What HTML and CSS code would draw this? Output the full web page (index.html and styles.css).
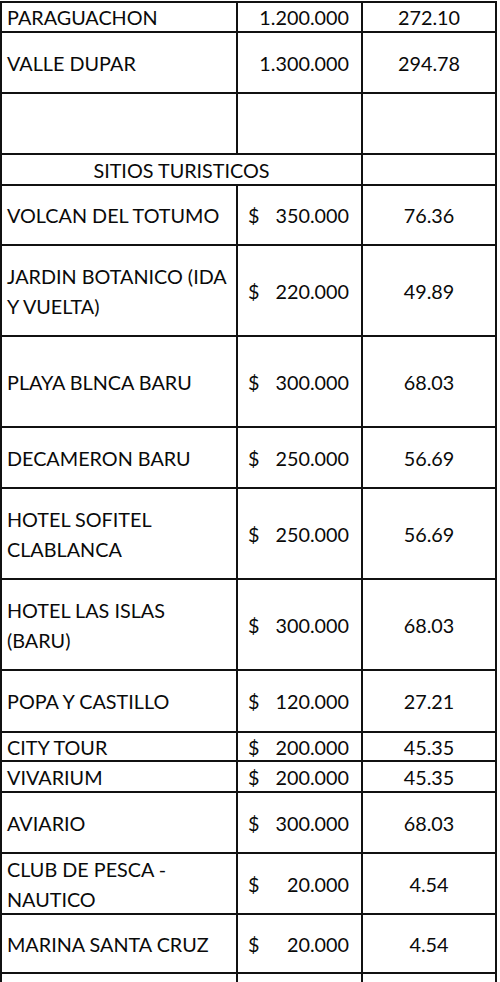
FILE: index.html
```html
<!DOCTYPE html>
<html lang="es">
<head>
<meta charset="utf-8">
<title>Tarifas</title>
<link rel="stylesheet" href="styles.css">
</head>
<body>
<div class="sheet">
  <div class="cell name">PARAGUACHON</div>
  <div class="cell amt"><span class="cur"></span><span class="num">1.200.000</span></div>
  <div class="cell usd">272.10</div>

  <div class="cell name">VALLE DUPAR</div>
  <div class="cell amt"><span class="cur"></span><span class="num">1.300.000</span></div>
  <div class="cell usd">294.78</div>

  <div class="cell name"></div>
  <div class="cell amt"></div>
  <div class="cell usd"></div>

  <div class="cell head">SITIOS TURISTICOS</div>
  <div class="cell usd"></div>

  <div class="cell name">VOLCAN DEL TOTUMO</div>
  <div class="cell amt"><span class="cur">$</span><span class="num">350.000</span></div>
  <div class="cell usd">76.36</div>

  <div class="cell name">JARDIN BOTANICO (IDA<br>Y VUELTA)</div>
  <div class="cell amt"><span class="cur">$</span><span class="num">220.000</span></div>
  <div class="cell usd">49.89</div>

  <div class="cell name">PLAYA BLNCA BARU</div>
  <div class="cell amt"><span class="cur">$</span><span class="num">300.000</span></div>
  <div class="cell usd">68.03</div>

  <div class="cell name">DECAMERON BARU</div>
  <div class="cell amt"><span class="cur">$</span><span class="num">250.000</span></div>
  <div class="cell usd">56.69</div>

  <div class="cell name">HOTEL SOFITEL<br>CLABLANCA</div>
  <div class="cell amt"><span class="cur">$</span><span class="num">250.000</span></div>
  <div class="cell usd">56.69</div>

  <div class="cell name">HOTEL LAS ISLAS<br>(BARU)</div>
  <div class="cell amt"><span class="cur">$</span><span class="num">300.000</span></div>
  <div class="cell usd">68.03</div>

  <div class="cell name">POPA Y CASTILLO</div>
  <div class="cell amt"><span class="cur">$</span><span class="num">120.000</span></div>
  <div class="cell usd">27.21</div>

  <div class="cell name">CITY TOUR</div>
  <div class="cell amt"><span class="cur">$</span><span class="num">200.000</span></div>
  <div class="cell usd">45.35</div>

  <div class="cell name">VIVARIUM</div>
  <div class="cell amt"><span class="cur">$</span><span class="num">200.000</span></div>
  <div class="cell usd">45.35</div>

  <div class="cell name">AVIARIO</div>
  <div class="cell amt"><span class="cur">$</span><span class="num">300.000</span></div>
  <div class="cell usd">68.03</div>

  <div class="cell name">CLUB DE PESCA -<br>NAUTICO</div>
  <div class="cell amt"><span class="cur">$</span><span class="num">20.000</span></div>
  <div class="cell usd">4.54</div>

  <div class="cell name">MARINA SANTA CRUZ</div>
  <div class="cell amt"><span class="cur">$</span><span class="num">20.000</span></div>
  <div class="cell usd">4.54</div>

  <div class="cell name"></div>
  <div class="cell amt"></div>
  <div class="cell usd"></div>
</div>
</body>
</html>
```

FILE: styles.css
```css
html, body {
  margin: 0;
  padding: 0;
  background: #fff;
  overflow: hidden;
}

body {
  padding-top: 1px;
  font-family: "Lato", "Open Sans", sans-serif;
  font-size: 19.8px;
  color: #0a0a0a;
}

.sheet {
  display: grid;
  grid-template-columns: 234px 123px 132px;
  grid-template-rows: 28px 59px 59px 29px 58px 89px 89px 59px 89px 89px 60px 27px 29px 59px 59px 57px 60px;
  gap: 2px;
  padding: 2px;
  width: max-content;
  height: 979px;
  overflow: hidden;
  background: #111;
}

.cell {
  background: #fff;
  display: flex;
  align-items: center;
  line-height: 30px;
  overflow: hidden;
  white-space: nowrap;
}

.name {
  padding-left: 5px;
}

.amt {
  justify-content: space-between;
  padding-left: 10px;
  padding-right: 12px;
}

.usd {
  justify-content: center;
}

.head {
  grid-column: span 2;
  justify-content: center;
}
```
